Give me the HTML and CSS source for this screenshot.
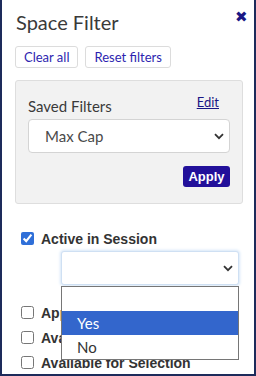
FILE: index.html
```html
<html>
<head>
<title>Space Filter</title>
<link rel="stylesheet" href="styles.css">
</head>
<body>
<div class="filter-panel">
    <div class="filter-head">
        <h1 class="filter-title">Space Filter</h1>
        <span class="close-btn">&#10006;</span>
    </div>
    <div class="filter-actions">
        <button class="btn-light">Clear all</button>
        <button class="btn-light">Reset filters</button>
    </div>

    <div class="saved-box">
        <div class="saved-head">
            <span class="saved-label">Saved Filters</span>
            <a class="edit-link" href="#">Edit</a>
        </div>
        <div class="select-wrap">
            <select class="saved-select">
                <option>Max Cap</option>
            </select>
            <svg class="chevron" width="10" height="7" viewBox="0 0 10 7"><path d="M1 1.2 L5 5.2 L9 1.2" fill="none" stroke="#333" stroke-width="1.8"/></svg>
        </div>
        <div class="apply-row">
            <button class="btn-apply">Apply</button>
        </div>
    </div>

    <div class="check-list">
        <label class="check-row"><input type="checkbox" checked> Active in Session</label>
        <div class="sub-select">
            <div class="select-wrap">
                <select class="session-select">
                    <option></option>
                    <option>Yes</option>
                    <option>No</option>
                </select>
                <svg class="chevron" width="10" height="7" viewBox="0 0 10 7"><path d="M1 1.2 L5 5.2 L9 1.2" fill="none" stroke="#333" stroke-width="1.8"/></svg>
            </div>
            <!-- open dropdown list -->
            <ul class="option-list">
                <li></li>
                <li class="hl">Yes</li>
                <li>No</li>
            </ul>
        </div>
        <label class="check-row"><input type="checkbox"> Approval Required</label>
        <label class="check-row"><input type="checkbox"> Available Now</label>
        <label class="check-row"><input type="checkbox"> Available for Selection</label>
    </div>
</div>
</body>
</html>
```

FILE: styles.css
```css
* {
    padding: 0;
    margin: 0;
    box-sizing: border-box;
}
body {
    font-family: Lato, "Open Sans", sans-serif;
    color: #333;
    width: 256px;
    height: 376px;
    overflow: hidden;
}
.filter-panel {
    height: 376px;
    border-left: 2px solid #1d2b5b;
    border-right: 2px solid #1d2b5b;
    border-bottom: 2px solid #1d2b5b;
    padding: 0 11px 0 13px;
    overflow: hidden;
}
.filter-head {
    display: flex;
    justify-content: space-between;
    padding-top: 10px;
    height: 46px;
}
.filter-title {
    font-size: 20px;
    font-weight: normal;
    line-height: 24px;
    color: #3a3a3a;
    padding-left: 1px;
}
.close-btn {
    color: #1a1785;
    font-size: 15px;
    line-height: 14px;
    margin-top: -1px;
    margin-right: -5px;
}
.filter-actions {
    display: flex;
    gap: 7px;
}
.btn-light {
    font-family: Lato, sans-serif;
    font-size: 13px;
    color: #2d1fb0;
    background: #fff;
    border: 1px solid #dcdcdc;
    border-radius: 3px;
    height: 22px;
    padding: 0 8px;
}
.saved-box {
    margin-top: 12px;
    width: 228px;
    background: #f2f2f2;
    border: 1px solid #dedede;
    border-radius: 3px;
    padding: 12px 12px 16px 12px;
}
.saved-head {
    display: flex;
    justify-content: space-between;
    align-items: flex-end;
    height: 22px;
}
.saved-label {
    font-size: 15px;
    color: #3a3a3a;
}
.edit-link {
    font-size: 13px;
    color: #1a1785;
    margin-right: 11px;
    margin-bottom: 5px;
}
.select-wrap {
    position: relative;
}
.chevron {
    position: absolute;
    right: 6px;
    top: 14px;
    pointer-events: none;
}
.saved-select {
    margin-top: 4px;
    width: 202px;
    height: 34px;
    appearance: none;
    background: #fff;
    border: 1px solid #d4d4d4;
    border-radius: 4px;
    font-family: Lato, sans-serif;
    font-size: 15px;
    color: #4a4a4a;
    padding-left: 16px;
}
.saved-head + .select-wrap .chevron {
    top: 18px;
}
.apply-row {
    display: flex;
    justify-content: flex-end;
    margin-top: 13px;
}
.btn-apply {
    background: #22109a;
    color: #fff;
    font-family: "Liberation Sans", Arial, sans-serif;
    font-weight: bold;
    font-size: 13px;
    border: none;
    border-radius: 3px;
    width: 47px;
    height: 21px;
}
.check-list {
    margin-top: 22px;
    padding-left: 6px;
}
.check-row {
    display: flex;
    align-items: center;
    gap: 7px;
    font-family: "Liberation Sans", Arial, sans-serif;
    font-weight: bold;
    font-size: 14px;
    color: #333;
    height: 25px;
    white-space: nowrap;
}
.check-row input {
    width: 13px;
    height: 13px;
    accent-color: #2f6fd8;
}
.sub-select {
    position: relative;
    margin: 0 0 15px 40px;
    width: 178px;
}
.session-select {
    width: 178px;
    height: 34px;
    appearance: none;
    background: #fff;
    border: 1px solid #cfe0f3;
    border-radius: 3px;
    box-shadow: 0 0 3px 1px #d6e6f8;
    outline: none;
}
.option-list {
    position: absolute;
    top: 35px;
    left: 0;
    width: 178px;
    list-style: none;
    background: #fff;
    border: 1px solid #767676;
    font-family: Lato, sans-serif;
    font-size: 15px;
    color: #333;
    z-index: 5;
}
.option-list li {
    height: 24px;
    line-height: 24px;
    padding-left: 15px;
}
.option-list li.hl {
    background: #3366cc;
    color: #fff;
}
```
